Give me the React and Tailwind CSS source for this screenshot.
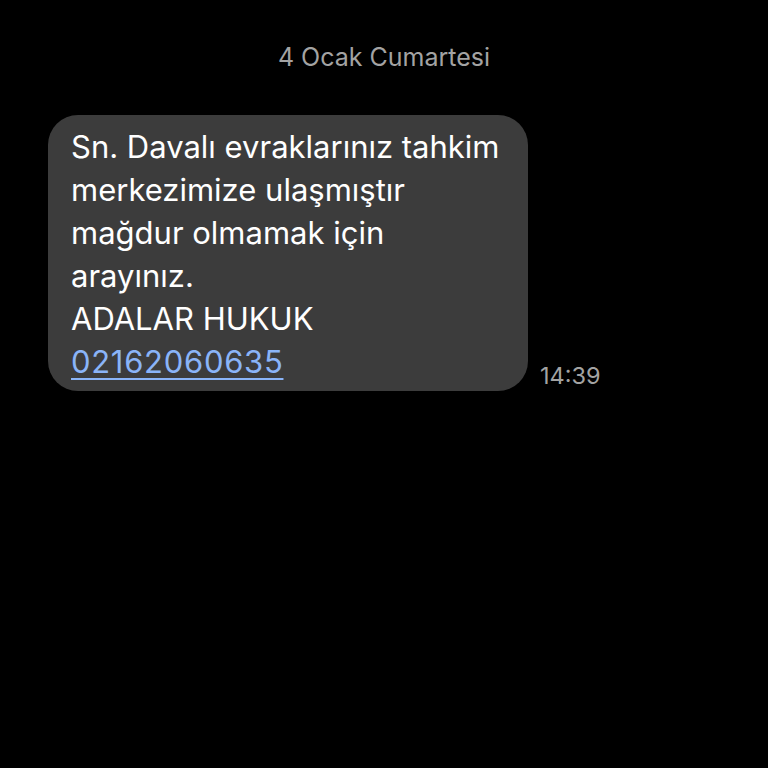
export default function App() {
  return (
    <div
      className="w-[768px] h-[768px] bg-black text-white overflow-hidden"
      style={{ fontFamily: 'Inter, "Open Sans", sans-serif' }}
    >
      <div className="pt-[42px] text-center text-[25px] leading-[30px] text-[#a3a3a3]">
        4 Ocak Cumartesi
      </div>
      <div className="flex items-end gap-[12px] pl-[48px] mt-[43px]">
        <div className="w-[480px] h-[276px] rounded-[30px] bg-[#3c3c3c] pl-[23px] pt-[10px] text-[31px] leading-[43px] text-white">
          <div>Sn. Davalı evraklarınız tahkim</div>
          <div>merkezimize ulaşmıştır</div>
          <div>mağdur olmamak için</div>
          <div>arayınız.</div>
          <div>ADALAR HUKUK</div>
          <div className="text-[#8ab4f8] underline underline-offset-[5px] decoration-[2px] tracking-[0.7px]">
            02162060635
          </div>
        </div>
        <div className="text-[23.5px] leading-[30px] text-[#a3a3a3]">14:39</div>
      </div>
    </div>
  );
}
